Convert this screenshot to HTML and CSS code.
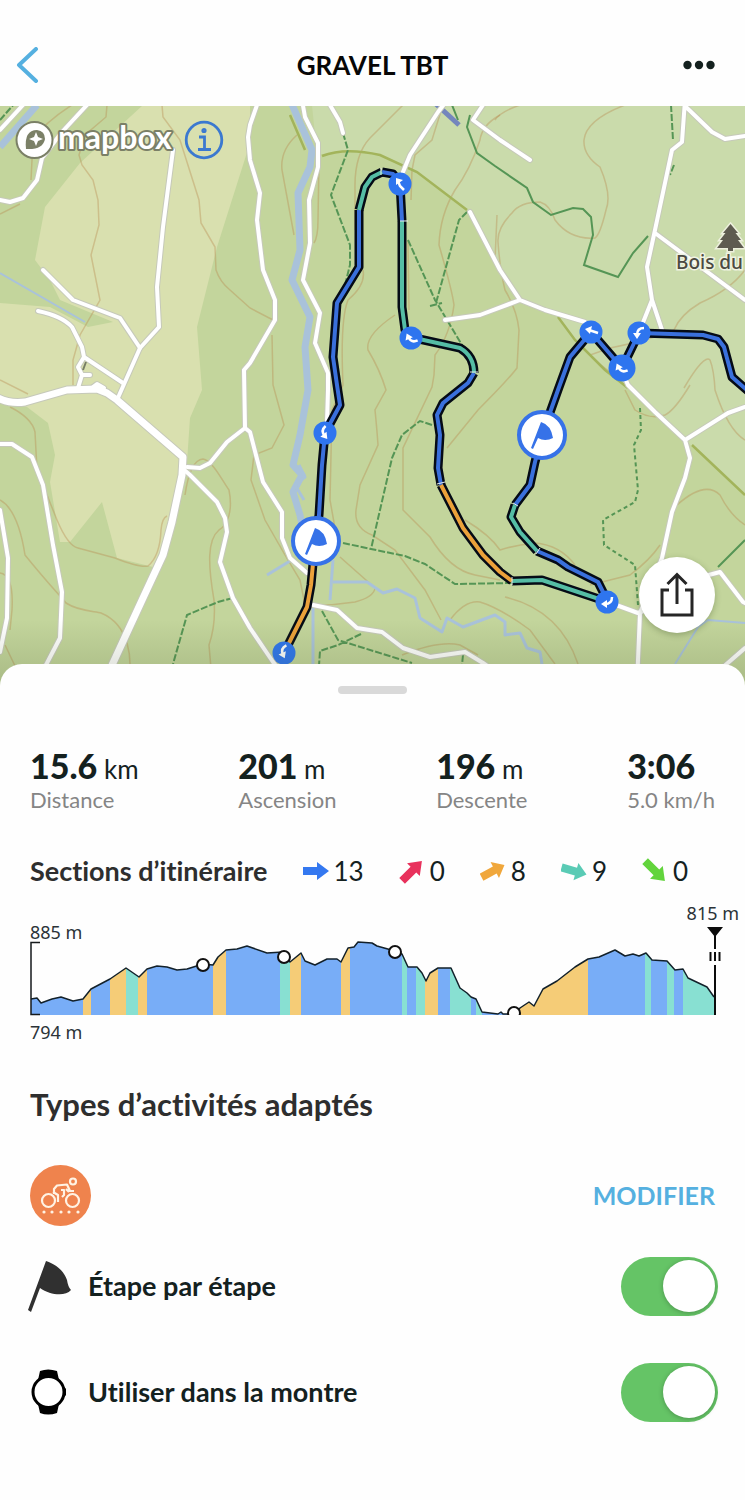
FILE: index.html
```html
<!DOCTYPE html>
<html lang="fr">
<head>
<meta charset="utf-8">
<meta name="viewport" content="width=device-width, initial-scale=1">
<title>GRAVEL TBT</title>
<link rel="stylesheet" href="styles.css">
</head>
<body>
<header class="topbar">
  <button class="icon-button" type="button" aria-label="Retour">
    <svg width="24" height="36" viewBox="0 0 24 36"><path d="M20 2 L3 18 L20 34" fill="none" stroke="#55b0e0" stroke-width="4" stroke-linecap="round" stroke-linejoin="round"/></svg>
  </button>
  <h1 class="topbar-title">GRAVEL TBT</h1>
  <button class="icon-button more" type="button" aria-label="Plus d’options">
    <svg width="32" height="10" viewBox="0 0 32 10" fill="#14211f"><circle cx="4.500" cy="5" r="4.200"/><circle cx="16" cy="5" r="4.200"/><circle cx="27.500" cy="5" r="4.200"/></svg>
  </button>
</header>

<main>
<section class="map" aria-label="Carte">
  <svg class="map-canvas" viewBox="0 106 745 580">
    <defs>
      <linearGradient id="shade" x1="0" y1="0" x2="0" y2="1"><stop offset="0" stop-color="#4a5a30" stop-opacity="0"/><stop offset="1" stop-color="#4a5a30" stop-opacity=".22"/></linearGradient>
      <g id="roads">
        <path d="M173 150L163 227 157 287 159 327 140 348 117 400"/>
        <path d="M43 270L73 300 120 318 140 348"/>
        <path d="M38 311Q62 316 72 327L82 347 84 357 78 367 82 375 78 388M84 357L123 383M82 375H90M93 387L97 384 104 388"/>
        <path d="M87 105L62 132 42 158 37 180 23 198 10 202 0 200M23 105L0 130"/>
        <path d="M257 105L250 125 248 137 250 160 260 193 257 220 263 270 275 300 275 320 250 363 244 370 245 428 227 442 210 463 200 468 187 467"/>
        <path d="M245 428L250 432 263 482 282 512 282 538 290 558 307 573"/>
        <path d="M182 468L190 475 217 502 225 518 227 532 220 562 233 598 250 628 273 662 290 684"/>
        <path d="M302 100L305 117 318 143 318 167 309 200 310 243 303 280 320 313 315 343 328 373 328 390 327 422"/>
        <path d="M313 605L337 610 357 628 382 632 403 648 430 657 465 652 483 663 500 675"/>
        <path d="M330 105L340 122 343 133M445 103L438 112 410 155 403 172"/>
        <path d="M483 105L473 120 500 140 530 160M470 212L500 270 520 300 545 310 585 322M445 320L480 315 520 300"/>
        <path d="M685 100L682 142 672 150 655 230 647 267 652 300 642 325M652 300L662 330M685 106L712 132 725 139 745 136M655 233L745 300"/>
        <path d="M625 378L628 385 655 412 685 440 690 458 685 478 672 512 662 558 640 613 637 684M685 440L728 413 745 407"/>
        <path d="M608 602L638 613 660 605M705 576L720 572 743 602 745 603M722 668L745 648"/>
        <path d="M0 444L12 444 32 457 43 485 53 545 62 592 60 638 47 663 35 684M0 510L8 558 7 618 0 652"/>
      </g>
      <g id="bigroads"><path d="M-2 398Q10 404 25 402L67 390 97 389 107 393 117 400 183 457 182 475 172 522 163 555 143 598 113 663 104 684"/></g>
      <g id="route-blue">
        <path d="M315 542L319 515 322 465 325 433 340 405 337 385 333 357 337 303 359 267V210"/>
        <path d="M382 172L393 174 400 183 402 221"/>
        <path d="M474 373L468 383 443 403 437 415 440 435 438 468 441 485"/>
        <path d="M608 602L598 582 568 567 558 560 537 551M515 505L530 485 535 462 542 435 558 390 570 357 591 332 622 368 639 333 703 335 718 339 724 347 732 377 748 391"/>
      </g>
      <g id="route-teal">
        <path d="M359 210L365 187 372 177 382 172M402 221V307L405 330 410 337 460 348Q474 356 474 373"/>
        <path d="M512 581L542 580 608 602M537 551L520 532 511 517 515 505"/>
      </g>
      <g id="route-orange"><path d="M284 653L307 607 311 585 315 542M441 485L463 528 483 555 500 572 512 581"/></g>
      <g id="waypoint"><circle r="23" fill="#fff" stroke="#3672e8" stroke-width="4"/><path d="M-1 -13Q9 -10 11 3Q3 7 -4 3L-9 14-11 13Z" fill="#3672e8"/></g>
      <g id="hook"><path d="M5 -5Q-2 -5 -2 2" fill="none" stroke="#fff" stroke-width="2.500"/><path d="M-6 0H2L-2 6Z" fill="#fff"/></g>
    </defs>

    <rect y="106" width="745" height="580" fill="#c3d59c"/>
    <path d="M143 105H250V143L217 247 197 327 202 390 190 418 187 462 165 540 153 567 117 558 102 502 70 542 60 542 50 482 55 455 48 423 27 407 0 398V303L50 307 88 327 113 322 60 300 50 280 35 260 45 207 80 163Z" fill="#d9e0af"/>
    <path d="M312 105L317 155 347 150 380 155 417 172 467 210 500 270 520 300 558 317 575 340 605 370 628 383 685 440 745 495V105Z" fill="#cadbab"/>

    <g class="contours">
      <path d="M72 105Q45 122 33 140L31 180M107 105L106 117 85 135 79 155 82 165 93 180 98 200 99 225 91 255 100 300 80 335 73 360 73 385"/>
      <path d="M0 214L20 204M162 105L163 117 180 140 199 200 201 223 215 247 216 270Q220 282 230 290L250 308 275 321"/>
      <path d="M0 380L28 394M10 407Q32 418 35 432L37 470 57 520Q68 546 78 548L115 558Q140 568 148 566 160 556 161 530 162 518 167 516"/>
      <path d="M0 500Q18 510 25 555C45 580 62 598 66 603 80 612 96 611 101 613 130 625 133 660 128 684M0 573Q14 575 12 610L10 630M5 645L16 668"/>
      <path d="M185 495Q190 460 203 459C212 460 222 480 229 490 233 510 228 525 219 530 207 540 208 565 214 600Q216 625 209 645L212 680"/>
      <path d="M272 335L273 385 284 425 272 448 254 455 251 480 265 520 285 555 300 580 305 605Q330 606 355 602 374 597 375 588L340 557"/>
      <path d="M297 135Q280 150 282 170L294 235M319 160L318 220Q318 237 314 243M403 105L370 138Q354 155 355 190V230M363 270Q366 285 348 300 340 320 343 385L332 410 330 500 338 545"/>
      <path d="M408 240L409 310M395 315Q365 335 368 350 380 370 386 390L375 410Q377 430 378 445L360 485 356 510Q354 528 372 535L395 550 425 590 441 620"/>
      <path d="M443 105Q435 130 432 140L415 155 412 170 411 200M500 115Q482 125 480 140 470 170 455 190 440 215 439 245 452 290 454 305 450 335 435 355L434 375 432 387 403 448V510L430 537Q450 570 475 575L500 580"/>
      <path d="M497 215L495 260M520 105Q500 112 495 120M625 105Q586 120 584 140 583 155 600 167 612 195 606 210 600 235 595 238 570 240 555 220 550 205 540 202 520 202 512 213 497 228 498 242 500 270 505 290 517 310 519 330L517 368Q508 380 478 410L447 448"/>
      <path d="M745 270Q730 290 700 303 680 315 674 330 650 340 610 348L590 355Q600 365 610 372M684 388Q704 354 710 360 714 370 715 390 728 430 745 440M690 385Q675 410 665 415 650 420 635 410L625 390"/>
      <path d="M465 520Q490 535 500 550 515 545 535 543 560 545 575 565M590 585L630 575Q650 560 660 545M677 505Q705 480 720 495 730 515 745 525M450 620Q465 600 480 602 500 608 530 630L555 664M505 597Q560 610 578 664M402 655Q440 640 460 645L478 655"/>
    </g>

    <g class="olive"><path d="M322 156Q345 147 380 155L417 172 467 210M558 317L575 340 605 370 628 388M692 445L745 495M290 115L305 150"/></g>
    <g class="trail-solid"><path d="M452 105L458 120M470 115L467 127 477 153 495 166 527 188 533 202 551 215 573 208 583 209 591 217 593 235 584 265 618 277 633 253 648 236M718 567L745 540"/></g>
    <g class="trails">
      <path d="M343 133L348 150 331 195 350 245 350 265 345 285M408 240L435 300 465 350M467 212L459 220 436 303M430 306L442 303"/>
      <path d="M671 105L673 140M674 165L670 175"/>
      <path d="M432 425L420 421 402 435 392 458 371 549M343 543L371 549 405 556 425 564 455 584 512 583M322 611L338 640 412 663M361 634L338 645 320 651 318 680M233 598L218 602 187 615 173 664M463 655L461 675"/>
      <path d="M640 408L641 430 634 445 638 490 635 502 603 520 604 545 635 565 638 605" stroke-dasharray="4 3"/>
      <path d="M0 120L15 103"/>
    </g>

    <g class="water">
      <path d="M37 105L0 147" stroke-width="7"/><path d="M0 273L85 322" stroke-width="2"/>
      <path d="M290 100L312 150 310 167 298 193 300 250 292 280 310 317 305 347 308 390 300 435 293 465 302 475 293 492 300 515 302 525" stroke-width="7"/>
      <path d="M299 465L305 477 295 485 304 500M267 575L290 561M333 560L330 600M333 582L367 582 383 593 397 589 415 598 420 618 442 632 447 618 463 627 495 615 505 622 505 635 520 633 527 648 540 652 542 664M313 605V684" stroke-width="3"/>
      <path d="M745 623L708 620 698 627 675 664" stroke-width="2"/>
      <path d="M436 104L459 125" stroke="#7486bd" stroke-width="5"/>
    </g>

    <use href="#roads" class="road-case"/><use href="#bigroads" class="big-case"/>
    <use href="#roads" class="road"/><use href="#bigroads" class="big-road"/>
    <path d="M86 362L83 370" stroke="#777d65" stroke-width="2"/>

    <g class="route-case"><use href="#route-blue"/><use href="#route-teal"/><use href="#route-orange"/></g>
    <g class="route"><use href="#route-blue" stroke="#3a70dc"/><use href="#route-teal" stroke="#55bda5"/><use href="#route-orange" stroke="#eba13a"/></g>
    <path d="M381 168V175M400 221H408M470 372H478M437 484L445 482M512 577V585M513 503L518 506M536 554L540 548" stroke="#e7edf0" stroke-width="1"/>

    <g fill="#2e75ef">
      <circle cx="400" cy="184" r="11.500"/><circle cx="411" cy="338" r="11.500"/><circle cx="325" cy="433" r="11.500"/><circle cx="284" cy="653" r="11.500"/>
      <circle cx="607" cy="602" r="11.500"/><circle cx="591" cy="332" r="11.500"/><circle cx="622" cy="368" r="13.500"/><circle cx="639" cy="333" r="11.500"/>
    </g>
    <path d="M404 190L400 186 398 181" fill="none" stroke="#fff" stroke-width="2.500"/><path d="M396 178L403 180 396 185Z" fill="#fff"/>
    <use href="#hook" transform="translate(411 338) rotate(-25) scale(1 -1)"/>
    <use href="#hook" transform="translate(325 433) rotate(-40)"/>
    <use href="#hook" transform="translate(284 652) rotate(-25)"/>
    <use href="#hook" transform="translate(607 602) matrix(0 -1 -1 0 0 0)"/>
    <path d="M598 333L589 330" stroke="#fff" stroke-width="2.500"/><path d="M585 329L592 326 590 334Z" fill="#fff"/>
    <use href="#hook" transform="translate(621 368) rotate(-25) scale(1 -1)"/>
    <use href="#hook" transform="translate(639 333)"/>
    <use href="#waypoint" transform="translate(316 541)"/>
    <use href="#waypoint" transform="translate(542 435)"/>

    <path d="M730.500 224L738 233H735.500L741 240H738L744 248H733V251H728V248H717L723 240H720L725.500 233H723Z" fill="#5e5b50" stroke="#edf0dd" stroke-width="3" paint-order="stroke"/>
    <text class="place" x="676" y="269">Bois du J</text>
    <rect y="620" width="745" height="66" fill="url(#shade)"/>
  </svg>

  <div class="map-brand">
    <svg width="160" height="44" viewBox="0 0 160 44" role="img" aria-label="mapbox">
      <circle cx="19.500" cy="22" r="18" fill="#fff" stroke="#7b8067" stroke-width="2"/>
      <path d="M11 31Q9 12 22 12Q30 13 30 21Q28 32 11 31Z" fill="#7b8067"/>
      <path d="M21 14L23 19 28 21 23 23 21 28 19 23 14 21 19 19Z" fill="#fff"/>
      <text class="brand-text" x="43" y="31">mapbox</text>
    </svg>
    <button class="icon-button" type="button" aria-label="Informations">
      <svg width="40" height="40" viewBox="0 0 40 40" fill="none" stroke="#3b79d0" stroke-width="2.800"><circle cx="20" cy="20" r="17.800"/><path d="M15 17H20.500V29M14 29.500H27"/><circle cx="20" cy="10.500" r="1.200"/></svg>
    </button>
  </div>
  <button class="share" type="button" aria-label="Partager">
    <svg width="36" height="46" viewBox="0 0 36 46" fill="none" stroke="#262626" stroke-width="3"><path d="M10 18H3V43H33V18H26M18 32V3M8.500 12L18 2.500 27.500 12"/></svg>
  </button>
</section>

<section class="sheet">
  <div class="handle"></div>
  <dl class="stats">
    <div><dd><strong>15.6</strong> km</dd><dt>Distance</dt></div>
    <div><dd><strong>201</strong> m</dd><dt>Ascension</dt></div>
    <div><dd><strong>196</strong> m</dd><dt>Descente</dt></div>
    <div><dd><strong>3:06</strong></dd><dt>5.0 km/h</dt></div>
  </dl>

  <div class="sections">
    <h2 class="sections-title">Sections d’itinéraire</h2>
    <ul class="section-list">
      <li><svg class="arrow" viewBox="-13 -13 26 26" fill="#3478f0"><path d="M-13 -4H1V-9L13 0 1 9V4H-13Z"/></svg>13</li>
      <li><svg class="arrow" viewBox="-13 -13 26 26" fill="#e8315c"><path transform="rotate(-45)" d="M-14 -4H2V-9L14 0 2 9V4H-14Z"/></svg>0</li>
      <li><svg class="arrow" viewBox="-13 -13 26 26" fill="#f0a73c"><path transform="rotate(-28)" d="M-13 -4H2V-9L13 0 2 9V4H-13Z"/></svg>8</li>
      <li><svg class="arrow" viewBox="-13 -13 26 26" fill="#5acbb5"><path transform="rotate(16)" d="M-13 -4H2V-9L13 0 2 9V4H-13Z"/></svg>9</li>
      <li><svg class="arrow" viewBox="-13 -13 26 26" fill="#62d43c"><path transform="rotate(45)" d="M-14 -4H2V-9L14 0 2 9V4H-14Z"/></svg>0</li>
    </ul>
  </div>

  <svg class="profile" viewBox="0 900 745 150" role="img" aria-label="Profil d’altitude">
    <defs>
      <path id="ridge" d="M31 999L37 998 41 1003 52 999 61 997 73 1001 83 999 91 989 110 979 126 968 139 977 147 969 157 966 167 967 177 970 187 969 203 964 213 965 218 957 226 950 237 949 247 946 267 953 283 952 290 962 301 953 305 961 315 965 327 959 337 959 341 962 348 948 354 947 358 942 372 943 377 946 395 951 402 954 408 967 417 967 422 973 426 981 430 973 438 968 451 968 460 988 467 993 471 997 476 999 482 1012 498 1014 501 1012 503 1014 514 1014 520 1008 529 1002 534 1006 543 989 557 981 575 967 588 959 599 957 615 950 625 956 633 954 639 956 646 953 652 960 667 961 675 970 683 969 688 978 707 987 714 997"/>
      <clipPath id="area"><path d="M31 999L37 998 41 1003 52 999 61 997 73 1001 83 999 91 989 110 979 126 968 139 977 147 969 157 966 167 967 177 970 187 969 203 964 213 965 218 957 226 950 237 949 247 946 267 953 283 952 290 962 301 953 305 961 315 965 327 959 337 959 341 962 348 948 354 947 358 942 372 943 377 946 395 951 402 954 408 967 417 967 422 973 426 981 430 973 438 968 451 968 460 988 467 993 471 997 476 999 482 1012 498 1014 501 1012 503 1014 514 1014 520 1008 529 1002 534 1006 543 989 557 981 575 967 588 959 599 957 615 950 625 956 633 954 639 956 646 953 652 960 667 961 675 970 683 969 688 978 707 987 714 997V1015H31Z"/></clipPath>
      <clipPath id="floor"><rect x="0" y="900" width="745" height="115"/></clipPath>
    </defs>
    <g clip-path="url(#area)">
      <rect x="31" y="940" width="684" height="75" fill="#78adf7"/>
      <path fill="#f5cc77" d="M83 940h8v75h-8zM110 940h16v75h-16zM138 940h9v75h-9zM213 940h13v75h-13zM290 940h11v75h-11zM341 940h9v75h-9zM425 940h13v75h-13zM515 940h73v75h-73z"/>
      <path fill="#88e0d2" d="M126 940h12v75h-12zM280 940h10v75h-10zM402 940h5v75h-5zM416 940h9v75h-9zM450 940h21v75h-21zM476 940h6v75h-6zM645 940h6v75h-6zM667 940h7v75h-7zM683 940h32v75h-32z"/>
    </g>
    <use href="#ridge" fill="none" stroke="#13212a" stroke-width="1.500" stroke-linejoin="round"/>
    <path d="M40 942.500H31V1014.500H40" fill="none" stroke="#161a1c" stroke-width="1.500"/>
    <g fill="#fff" stroke="#111" stroke-width="2" clip-path="url(#floor)"><circle cx="203" cy="965" r="6"/><circle cx="284" cy="957" r="6"/><circle cx="395" cy="952" r="6"/><circle cx="514" cy="1013" r="6"/></g>
    <path d="M707 927H723L715 937ZM714 935h2v14h-2zM714 965h2v50h-2zM709.500 952h2v9h-2zM714 952h2v9h-2zM718.500 952h2v9h-2z" fill="#0c0c0c"/>
    <text x="30" y="939">885 m</text>
    <text x="30" y="1039">794 m</text>
    <text x="739" y="920" text-anchor="end">815 m</text>
  </svg>

  <h2 class="types-title">Types d’activités adaptés</h2>
  <div class="row activity">
    <svg width="61" height="61" viewBox="0 0 61 61" role="img" aria-label="Vélo gravel">
      <circle cx="30.500" cy="30.500" r="30.500" fill="#ef834d"/>
      <g fill="none" stroke="#fff3e4" stroke-width="2.200" stroke-linejoin="round"><circle cx="18.500" cy="35.500" r="6.500"/><circle cx="42.500" cy="35.500" r="6.500"/><circle cx="43" cy="16.500" r="3"/><path d="M24 29L24 24 27 20.500 37 19.500 40 26H44M28 37V30L23 27M36 24L39 27M31 25H34V30L32 32"/></g>
      <g fill="#fff3e4"><circle cx="14" cy="47" r="1.600"/><circle cx="22" cy="47" r="1.600"/><circle cx="31" cy="47" r="1.600"/><circle cx="39" cy="47" r="1.600"/><circle cx="48" cy="47" r="1.600"/></g>
    </svg>
    <button class="edit" type="button">MODIFIER</button>
  </div>
  <div class="row">
    <svg class="row-icon" viewBox="0 0 46 52" fill="#303030"><path d="M19 1C31 5 37 12 40 20Q41 27 44 30C38 37 23 35 13 28L4 52 1 50Z"/></svg>
    <label class="row-label" for="steps">Étape par étape</label>
    <input class="switch" id="steps" type="checkbox" role="switch" checked>
  </div>
  <div class="row">
    <svg class="row-icon" viewBox="0 0 46 52"><path d="M13 5Q21 2 30 5L32 14H11ZM11 38H32L30 47Q21 50 13 47Z" fill="#000"/><path d="M35 18l4 5v6l-4 5z" fill="#000"/><circle cx="21.500" cy="26" r="15.500" fill="#fff" stroke="#000" stroke-width="3"/></svg>
    <label class="row-label" for="watch">Utiliser dans la montre</label>
    <input class="switch" id="watch" type="checkbox" role="switch" checked>
  </div>
</section>
</main>
</body>
</html>
```
FILE: styles.css
```css
* { box-sizing: border-box; }

body {
  margin: 0;
  background: #fefefe;
  color: #14211f;
  font-family: Lato, "Open Sans", sans-serif;
  font-variant-ligatures: none;
}

h1, h2, dl, dd, ul { margin: 0; padding: 0; }
button { border: 0; background: none; padding: 0; font: inherit; color: inherit; cursor: pointer; }
svg { display: block; flex: none; }

.topbar {
  display: grid;
  grid-template-columns: 1fr auto 1fr;
  align-items: center;
  padding: 44px 16px 20px;
  min-height: 106px;
}
.topbar .icon-button { justify-self: start; }
.topbar .more { justify-self: end; padding-right: 14px; }
.topbar-title { font-size: 26px; line-height: 32px; font-weight: 700; color: #060606; }

.map { position: relative; }
.map-canvas { width: 100%; height: auto; }
.contours { fill: none; stroke: #b8884e; stroke-opacity: .38; stroke-width: 1.5; }
.olive { fill: none; stroke: #a3b45b; stroke-width: 2.5; }
.trails, .trail-solid { fill: none; stroke: #559555; stroke-width: 2; }
.trails { stroke-dasharray: 7 2; }
.water { fill: none; stroke: #a9c2da; stroke-linejoin: round; }
.road, .road-case, .big-road, .big-case { fill: none; stroke-linecap: round; stroke-linejoin: round; }
.road-case { stroke: #c6c9ba; stroke-width: 6; }
.road { stroke: #fff; stroke-width: 4; }
.big-case { stroke: #c6c9ba; stroke-width: 9; }
.big-road { stroke: #fff; stroke-width: 7; }
.route-case { fill: none; stroke: #050b16; stroke-width: 9; stroke-linejoin: round; }
.route { fill: none; stroke-width: 4; stroke-linejoin: round; }
.place {
  font: 500 19px "Noto Sans", sans-serif;
  fill: #4c4a42;
  stroke: #f0f3e2;
  stroke-width: 3px;
  paint-order: stroke;
}

.map-brand {
  position: absolute;
  top: 12px;
  left: 15px;
  display: flex;
  align-items: center;
  gap: 9px;
}
.brand-text {
  font: 700 32px Lato, sans-serif;
  fill: #fff;
  stroke: #7b8067;
  stroke-width: 4px;
  stroke-linejoin: round;
  paint-order: stroke;
}
.share {
  position: absolute;
  right: 30px;
  bottom: 53px;
  width: 76px;
  height: 76px;
  display: grid;
  place-items: center;
  border-radius: 50%;
  background: #fff;
  box-shadow: 0 2px 6px rgb(40 60 20 / 30%);
}

.sheet {
  position: relative;
  margin-top: -22px;
  padding: 22px 0 72px;
  border-radius: 22px 22px 0 0;
  background: #fefefe;
}
.handle { width: 69px; height: 8px; margin: 0 auto; border-radius: 4px; background: #d9d9d9; }

.stats {
  display: flex;
  justify-content: space-between;
  padding: 53px 30px 0;
}
.stats div { display: flex; flex-direction: column; }
.stats dd { font-size: 26px; line-height: 38px; }
.stats strong { font-size: 34px; font-weight: 900; }
.stats dt { font-size: 22px; line-height: 24px; color: #858585; }

.sections {
  display: flex;
  align-items: center;
  gap: 35px;
  padding: 43px 30px 0;
}
.sections-title { font-size: 27px; line-height: 32px; color: #2e2e2e; white-space: nowrap; }
.section-list { display: flex; gap: 35px; list-style: none; }
.section-list li { display: flex; align-items: center; gap: 5px; font-size: 26px; line-height: 32px; }
.arrow { width: 26px; height: 26px; }

.profile { width: 100%; height: auto; margin-top: 13px; }
.profile text { font: 18px "Noto Sans", sans-serif; fill: #2b3338; }

.types-title { padding: 36px 30px 0; font-size: 31px; line-height: 36px; color: #2e2e2e; }
.row {
  display: flex;
  align-items: center;
  gap: 15px;
  min-height: 106px;
  padding: 0 27px;
}
.activity { justify-content: space-between; min-height: 76px; padding: 0 30px; margin-top: 35px; }
.edit { font-size: 25px; font-weight: 700; color: #55b0e0; }
.row-icon { width: 46px; height: 52px; }
.row-label { flex: 1; font-size: 27px; line-height: 32px; font-weight: 700; }
.switch {
  appearance: none;
  display: flex;
  align-items: center;
  width: 97px;
  height: 59px;
  margin: 0;
  padding: 0 3px;
  border-radius: 30px;
  background: #c9c9c9;
  cursor: pointer;
}
.switch::before {
  content: "";
  width: 52px;
  height: 52px;
  border-radius: 50%;
  background: #fff;
  box-shadow: 0 1px 5px rgb(0 0 0 / 25%);
}
.switch:checked { justify-content: flex-end; background: #65c466; }
```
